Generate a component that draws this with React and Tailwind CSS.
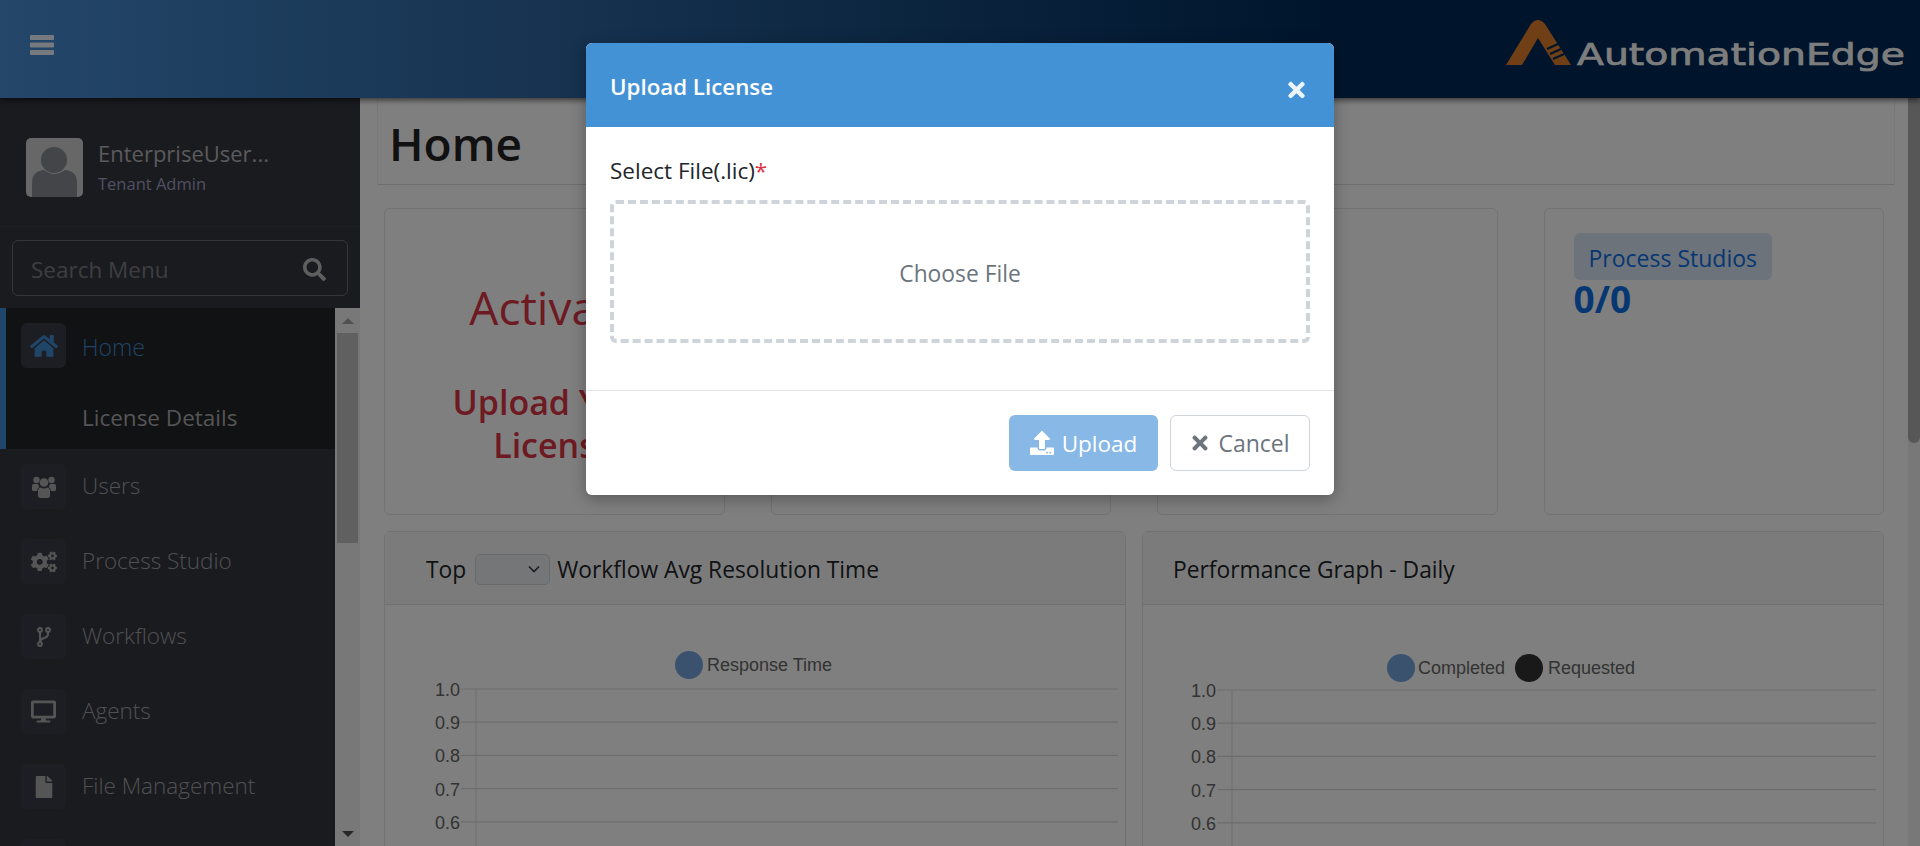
import React from 'react';
import { FaHome, FaCogs, FaDesktop, FaFile, FaSearch, FaTimes, FaUpload } from 'react-icons/fa';

const UsersIcon = ({ className }) => (
  <svg viewBox="0 0 24 22" className={className} fill="currentColor">
    <circle cx="4.500" cy="4" r="3.200" />
    <circle cx="19.500" cy="4" r="3.200" />
    <circle cx="12" cy="6.500" r="4.300" />
    <path d="M0 9.500 Q0 8 2 8 H6 Q6.500 10 7.500 11 Q5.500 12 5 15 H1.500 Q0 15 0 13.500 Z" />
    <path d="M24 9.500 Q24 8 22 8 H18 Q17.500 10 16.500 11 Q18.500 12 19 15 H22.500 Q24 15 24 13.500 Z" />
    <path d="M6 15 Q6 11.500 9 11.500 Q12 13.500 15 11.500 Q18 11.500 18 15 V19.500 Q18 22 15.500 22 H8.500 Q6 22 6 19.500 Z" />
  </svg>
);

const ForkIcon = ({ className }) => (
  <svg viewBox="0 0 14 20" className={className} fill="none" stroke="currentColor" strokeWidth="2">
    <circle cx="3" cy="3" r="1.900" />
    <circle cx="11" cy="3" r="1.900" />
    <circle cx="3" cy="17" r="1.900" />
    <path d="M3 5 V15 M11 5 V7 Q11 10 7 11 Q3.500 12 3 15" />
  </svg>
);

const navItems = [
  { label: 'Users', icon: UsersIcon, size: 'w-[24px] h-[22px]' },
  { label: 'Process Studio', icon: FaCogs, size: 'w-[26px] h-[26px]' },
  { label: 'Workflows', icon: ForkIcon, size: 'w-[14px] h-[20px]' },
  { label: 'Agents', icon: FaDesktop, size: 'w-[25px] h-[25px]' },
  { label: 'File Management', icon: FaFile, size: 'w-[22px] h-[22px]' },
];

const ticks = ['1.0', '0.9', '0.8', '0.7', '0.6'];

// chart is clipped by the window, only the upper ticks are visible
const ChartGrid = ({ legend, top, left, right, legendY }) => (
  <svg className="block w-full h-[300px]" style={{ fontFamily: '"Liberation Sans", Arial, sans-serif' }}>
    {legend.map(item => (
      <g key={item.label}>
        <circle cx={item.cx} cy={legendY} r="14" fill={item.color} />
        <text x={item.tx} y={legendY + 6} fontSize="18" fill="#666">{item.label}</text>
      </g>
    ))}
    <line x1={left + 15} x2={left + 15} y1={top} y2="300" stroke="#d9d9d9" />
    {[...ticks, ''].map((tick, i) => (
      <g key={i}>
        <line x1={left} x2={right} y1={top + i * 33.2} y2={top + i * 33.2} stroke="#d9d9d9" strokeWidth="1.2" />
        {tick && <text x={left - 1} y={top + i * 33.2 + 7} fontSize="18" fill="#666" textAnchor="end">{tick}</text>}
      </g>
    ))}
  </svg>
);

const Logo = () => (
  <svg width="402" height="60" viewBox="0 0 402 60" className="block">
    <path d="M1 50 L26 9 Q33 1 40 9 L66 50 L50 50 L33 23 L17 50 Z" fill="#e07e2c" />
    <path d="M42 34 L53 29 M45 39 L56 34 M48 44 L59 39" stroke="#002a58" strokeWidth="2.200" />
    <text x="72" y="50" fontSize="30" fill="#fbfbfb" stroke="#fbfbfb" strokeWidth="0.700" textLength="328" lengthAdjust="spacingAndGlyphs" style={{ fontFamily: '"DejaVu Sans", sans-serif' }}>AutomationEdge</text>
  </svg>
);

const App = () => {
  return (
    <div className="relative h-[846px] w-full overflow-hidden bg-white flex flex-col text-[#212529]" style={{ fontFamily: '"Open Sans", "Noto Sans", sans-serif' }}>
      {/* Top bar */}
      <header className="h-[98px] shrink-0 flex items-center justify-between pl-[30px] pr-[13px] pb-[8px] bg-gradient-to-r from-[#488ed4] via-[#2c649e] via-30% to-[#002a58] to-70% shadow-[0_2px_6px_rgba(0,0,0,0.6)] z-10">
        <svg width="24" height="20" viewBox="0 0 24 20" fill="#ffffff" opacity="0.9">
          <rect width="24" height="5" rx="1" />
          <rect y="7.500" width="24" height="5" rx="1" />
          <rect y="15" width="24" height="5" rx="1" />
        </svg>
        <Logo />
      </header>

      <div className="flex flex-1 min-h-0">
        {/* Sidebar */}
        <aside className="w-[360px] shrink-0 flex flex-col bg-[#34363f]">
          <div className="h-[129px] shrink-0 flex items-center pl-[26px] border-b border-[#3e4049] pt-[10px]">
            <svg width="57" height="59" viewBox="0 0 57 59" className="rounded-[5px] bg-[#cfcfcf]">
              <circle cx="28" cy="22" r="13" fill="#868a91" />
              <path d="M6 59 V45 Q6 33 18 32 Q28 40 39 32 Q51 33 51 45 V59 Z" fill="#868a91" />
            </svg>
            <div className="ml-[15px]">
              <div className="text-[22px] leading-[28px] text-[#b4b4b8]">EnterpriseUser...</div>
              <div className="text-[16.500px] leading-[24px] mt-[5px] text-[#a0a0c4]">Tenant Admin</div>
            </div>
          </div>
          <div className="h-[81px] shrink-0 px-[12px] pt-[13px]">
            <div className="h-[56px] w-[336px] rounded-[6px] border border-[#6c6d75] flex items-center justify-between pl-[18px] pr-[21px]">
              <span className="text-[22.500px] text-[#7c7d84] mt-[3px]">Search Menu</span>
              <FaSearch className="w-[23px] h-[23px] mt-[3px] text-[#bdbdbd]" />
            </div>
          </div>

          <div className="flex flex-1 min-h-0">
            <nav className="flex-1 min-w-0 overflow-hidden">
              <div className="h-[141px] bg-[#222428] border-l-[6px] border-[#3f8ad0] pl-[15px] pt-[15px]">
                <div className="flex items-center">
                  <span className="w-[45px] h-[45px] rounded-[6px] bg-[#3b3d47] flex items-center justify-center">
                    <FaHome className="w-[28px] h-[28px] text-[#3f8ad0]" />
                  </span>
                  <span className="ml-[16px] mt-[3px] text-[23px] font-light text-[#3f8ad0]">Home</span>
                </div>
                <div className="ml-[61px] mt-[33px] text-[22.500px] font-medium text-[#aaaaac]">License Details</div>
              </div>
              <div className="pt-[15px] pl-[21px] flex flex-col gap-[30px]">
                {navItems.map(item => {
                  const Icon = item.icon;
                  return (
                    <div key={item.label} className="flex items-center h-[45px]">
                      <span className="w-[45px] h-[45px] shrink-0 rounded-[6px] bg-[#3b3d47] flex items-center justify-center">
                        <Icon className={`${item.size} text-[#aaaaaa]`} />
                      </span>
                      <span className="ml-[16px] mb-[2px] text-[22.500px] font-light text-[#a0a0a4]">{item.label}</span>
                    </div>
                  );
                })}
                <span className="w-[45px] h-[45px] shrink-0 rounded-[6px] bg-[#3b3d47]" />
              </div>
            </nav>
            {/* Sidebar scrollbar */}
            <div className="w-[25px] shrink-0 bg-[#f1f1f1] flex flex-col items-center">
              <div className="h-[25px] flex items-center justify-center">
                <div className="w-0 h-0 border-x-[6px] border-x-transparent border-b-[6px] border-b-[#a3a3a3]" />
              </div>
              <div className="w-[21px] h-[210px] bg-[#c1c1c1]" />
              <div className="flex-1" />
              <div className="h-[25px] flex items-center justify-center">
                <div className="w-0 h-0 border-x-[6px] border-x-transparent border-t-[6px] border-t-[#505050]" />
              </div>
            </div>
          </div>
        </aside>

        {/* Main */}
        <main className="flex-1 min-w-0 overflow-hidden">
          <div className="ml-[17px] mr-[13px] h-[87px] pl-[11px] pt-[3px] border-x border-x-[#f2f2f2] border-b border-b-[#dcdcdc] flex items-center">
            <h1 className="text-[46px] font-[560] leading-none text-[#222]">Home</h1>
          </div>
          <div className="ml-[24px] w-[1500px] mt-[23px]">
            <div className="grid grid-cols-4 gap-[46px]">
              <div className="h-[307px] rounded-[6px] border border-[#e4e4e4] flex flex-col items-center pt-[68px]">
                <div className="text-[46px] text-[#dc3545] leading-[60px]">Activate</div>
                <div className="mt-[44px] text-[34px] font-semibold text-[#dc3545] leading-[43px] text-center">Upload Your<br />License</div>
              </div>
              <div className="h-[307px] rounded-[6px] border border-[#e4e4e4]" />
              <div className="h-[307px] rounded-[6px] border border-[#e4e4e4]" />
              <div className="h-[307px] rounded-[6px] border border-[#e4e4e4] pt-[24px] pl-[29px]">
                <div className="inline-block h-[47px] rounded-[6px] bg-[#d8e6f5] px-[15px] pt-[2px] text-[23px] font-medium leading-[47px] text-[#0f6ee6]">Process Studios</div>
                <div className="text-[37px] font-bold leading-[38px] text-[#0f6ee6]">0/0</div>
              </div>
            </div>
            <div className="grid grid-cols-2 gap-[16px] mt-[16px]">
              <div className="rounded-[6px] border border-[#e2e2e2]">
                <div className="h-[73px] pl-[41px] pt-[4px] bg-[#f7f7f7] border-b border-[#dedede] flex items-center text-[22.800px]">
                  <span>Top</span>
                  <span className="ml-[9px] mr-[7px] mb-[2px] w-[75px] h-[31px] rounded-[5px] border border-[#ced4da] bg-[#e9ecef] flex items-center justify-end pr-[9px]">
                    <svg width="12" height="8" viewBox="0 0 12 8" fill="none" stroke="#343a40" strokeWidth="1.6"><path d="M1 1.500 L6 6.500 L11 1.500" /></svg>
                  </span>
                  <span>Workflow Avg Resolution Time</span>
                </div>
                <ChartGrid top={84} left={76} right={733} legendY={60} legend={[{ label: 'Response Time', cx: 304, tx: 322, color: '#74a5dc' }]} />
              </div>
              <div className="rounded-[6px] border border-[#e2e2e2]">
                <div className="h-[73px] pl-[30px] pt-[4px] bg-[#f7f7f7] border-b border-[#dedede] flex items-center text-[22.800px]">
                  <span>Performance Graph - Daily</span>
                </div>
                <ChartGrid top={85} left={74} right={733} legendY={63} legend={[
                  { label: 'Completed', cx: 258, tx: 275, color: '#74a5dc' },
                  { label: 'Requested', cx: 386, tx: 405, color: '#333' },
                ]} />
              </div>
            </div>
          </div>
        </main>

        {/* Page scrollbar */}
        <div className="w-[12px] shrink-0 bg-[#f1f1f1]">
          <div className="h-[345px] rounded-b-[6px] bg-[#aeaeae]" />
        </div>
      </div>

      {/* Backdrop */}
      <div className="absolute inset-0 z-20 bg-black/50" />

      {/* Upload dialog */}
      <div className="absolute z-30 left-[586px] top-[43px] w-[748px] h-[452px] rounded-[6px] bg-white overflow-hidden shadow-[0_4px_16px_rgba(0,0,0,0.3)] flex flex-col">
        <div className="h-[84px] shrink-0 bg-[#4492d6] flex items-center justify-between pl-[24px] pr-[26px]">
          <span className="mt-[3px] text-[22.300px] font-semibold text-white">Upload License</span>
          <FaTimes className="w-[23px] h-[24px] mt-[9px] text-white/90" />
        </div>
        <div className="h-[264px] shrink-0 px-[24px] pt-[28px] border-b border-[#e3e5e8]">
          <div className="text-[22.500px] leading-[32px]">Select File(.lic)<span className="text-[#dc3545]">*</span></div>
          <div className="mt-[13px] h-[143px] rounded-[6px] border-[4px] border-dashed border-[#ced4da] flex items-center justify-center pt-[5px] text-[22.800px] text-[#6c757d]">Choose File</div>
        </div>
        <div className="flex-1 flex justify-end gap-[12px] px-[24px] pt-[24px]">
          <div className="w-[149px] h-[56px] rounded-[6px] bg-[#88b8e6] flex items-center justify-center gap-[8px] text-[22.500px] text-white">
            <FaUpload className="w-[24px] h-[24px]" />
            <span className="mt-[1px]">Upload</span>
          </div>
          <div className="w-[140px] h-[56px] rounded-[6px] border border-[#ced4da] flex items-center justify-center gap-[8px] text-[23px] text-[#6c757d]">
            <FaTimes className="w-[20px] h-[22px]" />
            <span className="mt-[1px]">Cancel</span>
          </div>
        </div>
      </div>
    </div>
  );
};

export default App;
